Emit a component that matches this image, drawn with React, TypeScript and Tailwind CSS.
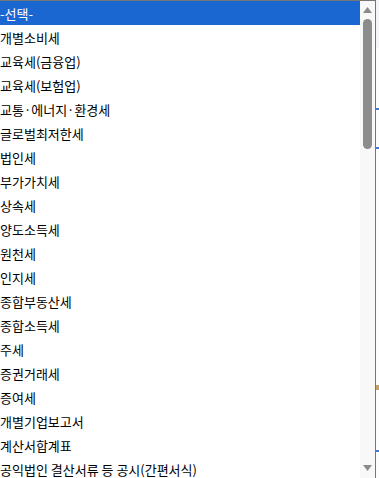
import React from 'react';

const options = [
  '-선택-',
  '개별소비세',
  '교육세(금융업)',
  '교육세(보험업)',
  '교통·에너지·환경세',
  '글로벌최저한세',
  '법인세',
  '부가가치세',
  '상속세',
  '양도소득세',
  '원천세',
  '인지세',
  '종합부동산세',
  '종합소득세',
  '주세',
  '증권거래세',
  '증여세',
  '개별기업보고서',
  '계산서합계표',
  '공익법인 결산서류 등 공시(간편서식)',
];

const App = () => {
  return (
    <div
      className="w-[379px] h-[478px] overflow-hidden bg-white flex"
      style={{ fontFamily: '"Noto Sans CJK KR", "Noto Sans", sans-serif' }}
    >
      <div className="w-[376px] h-full flex flex-col border-t border-r border-[#767676]">
        <div className="flex flex-1 min-h-0">
          {/* option list */}
          <ul className="flex-1 flex flex-col">
            {options.map((o, i) => (
              <li
                key={o}
                className={`h-[24px] shrink-0 flex items-center pl-0 text-[13px] leading-none whitespace-nowrap ${
                  i === 0 ? 'bg-[#1a67d2] text-white' : 'text-black'
                }`}
              >
                {o}
              </li>
            ))}
          </ul>
          {/* scrollbar */}
          <div className="w-[15px] h-full bg-[#f8f8f8] flex flex-col items-center">
            <div className="h-[18px] flex items-center justify-center">
              <svg width="9" height="6" viewBox="0 0 9 6">
                <path d="M4.5 0L9 6H0z" fill="#8a8a8a" />
              </svg>
            </div>
            <div className="w-[9px] h-[130px] rounded-full bg-[#8c8c8c]" />
            <div className="flex-1" />
            <div className="h-[18px] flex items-center justify-center pb-[2px]">
              <svg width="9" height="6" viewBox="0 0 9 6">
                <path d="M0 0H9L4.5 6z" fill="#8a8a8a" />
              </svg>
            </div>
          </div>
        </div>
      </div>
      {/* page behind the dropdown */}
      <div className="flex-1 h-full bg-[#fdfdfd] flex flex-col">
        <div className="h-[48px] bg-[#f3f5f8]" />
        <div className="h-[60px]" />
        <div className="h-[2px] bg-[#3b7be0]" />
        <div className="h-[37px]" />
        <div className="h-[2px] bg-[#3b7be0]" />
        <div className="h-[236px]" />
        <div className="h-[5px] bg-[#c8a060]" />
        <div className="h-[60px]" />
        <div className="h-[2px] bg-[#3b7be0]" />
      </div>
    </div>
  );
};

export default App;
